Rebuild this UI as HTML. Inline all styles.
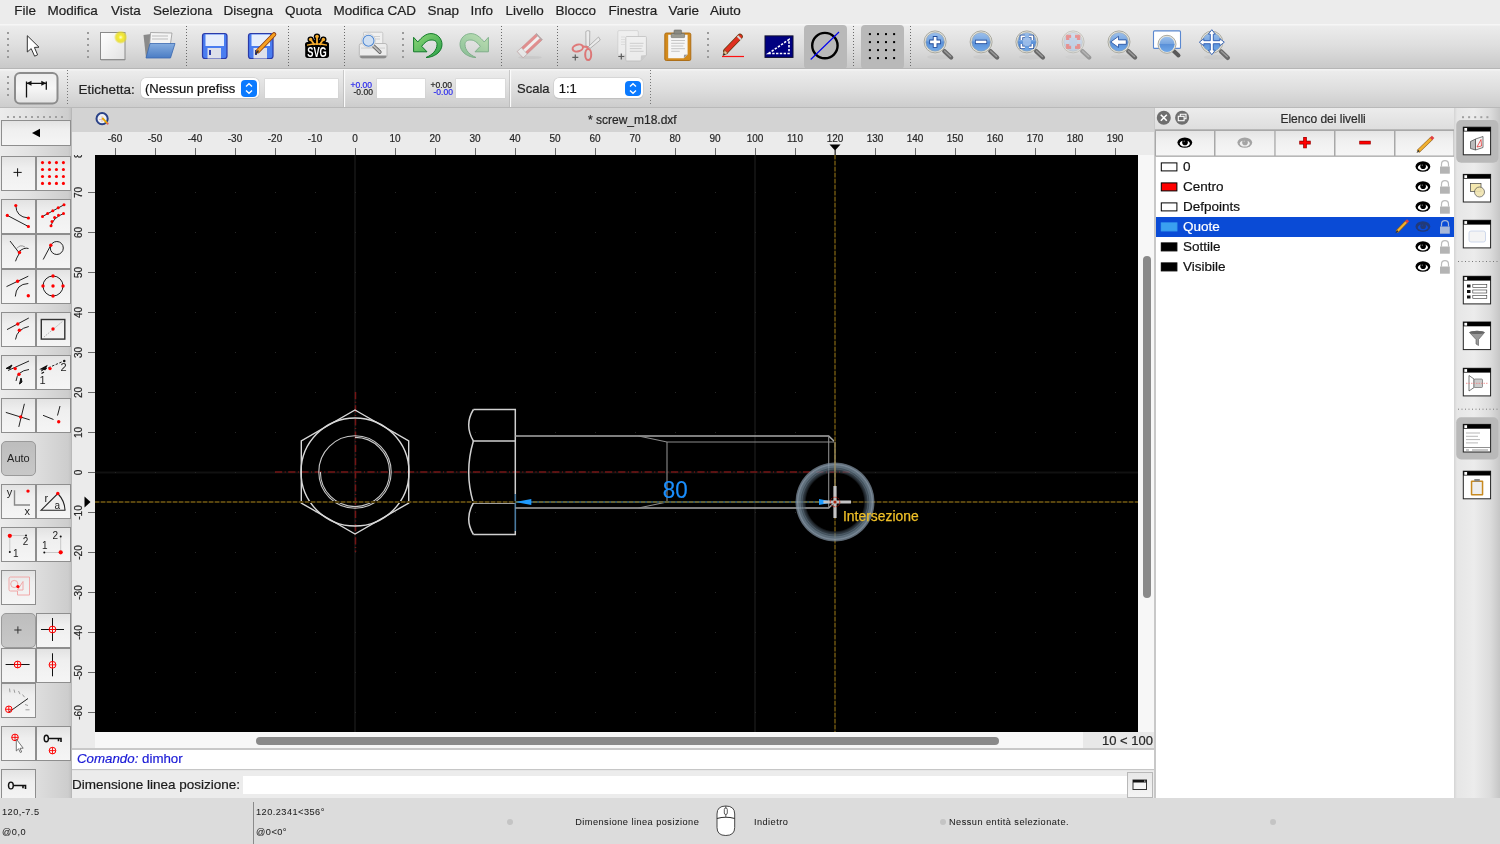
<!DOCTYPE html><html><head><meta charset="utf-8"><style>
*{margin:0;padding:0;box-sizing:border-box}
html,body{width:1500px;height:844px;overflow:hidden;background:#e6e6e6;}
body{will-change:transform;font-family:"Liberation Sans",sans-serif;color:#1f1f1f}
.a{position:absolute}
.t{position:absolute;white-space:nowrap;line-height:1;-webkit-text-stroke:0.2px currentColor}
</style></head><body><div class="a" style="left:0;top:0;width:1500px;height:24px;background:#ececec"></div>
<div class="t" style="left:14.2px;top:4px;font-size:13.5px;color:#1f1f1f">File</div>
<div class="t" style="left:47.5px;top:4px;font-size:13.5px;color:#1f1f1f">Modifica</div>
<div class="t" style="left:111px;top:4px;font-size:13.5px;color:#1f1f1f">Vista</div>
<div class="t" style="left:153px;top:4px;font-size:13.5px;color:#1f1f1f">Seleziona</div>
<div class="t" style="left:223.6px;top:4px;font-size:13.5px;color:#1f1f1f">Disegna</div>
<div class="t" style="left:285px;top:4px;font-size:13.5px;color:#1f1f1f">Quota</div>
<div class="t" style="left:333.6px;top:4px;font-size:13.5px;color:#1f1f1f">Modifica CAD</div>
<div class="t" style="left:427.6px;top:4px;font-size:13.5px;color:#1f1f1f">Snap</div>
<div class="t" style="left:470.4px;top:4px;font-size:13.5px;color:#1f1f1f">Info</div>
<div class="t" style="left:505.6px;top:4px;font-size:13.5px;color:#1f1f1f">Livello</div>
<div class="t" style="left:555.6px;top:4px;font-size:13.5px;color:#1f1f1f">Blocco</div>
<div class="t" style="left:608.4px;top:4px;font-size:13.5px;color:#1f1f1f">Finestra</div>
<div class="t" style="left:668.6px;top:4px;font-size:13.5px;color:#1f1f1f">Varie</div>
<div class="t" style="left:710px;top:4px;font-size:13.5px;color:#1f1f1f">Aiuto</div>
<div class="a" style="left:0;top:24px;width:1500px;height:45px;background:linear-gradient(#f6f6f6 0px,#f6f6f6 1px,#ececec 2px,#dedede 22px,#c9c9c9 44px,#b6b6b6 44px)"></div>
<div class="a" style="left:0;top:69px;width:1500px;height:39px;background:linear-gradient(#f4f4f4 0px,#f4f4f4 1px,#ececec 2px,#dedede 20px,#cdcdcd 38px,#b9b9b9 38px)"></div>
<svg class="a" style="left:0;top:24px" width="1500" height="44" viewBox="0 24 1500 44">
<defs>
<linearGradient id="gLens" x1="0" y1="0" x2="0" y2="1"><stop offset="0" stop-color="#9cc0ec"/><stop offset="0.45" stop-color="#78a6e0"/><stop offset="0.5" stop-color="#5a90d8"/><stop offset="1" stop-color="#70a8e8"/></linearGradient>
<linearGradient id="gLensF" x1="0" y1="0" x2="0" y2="1"><stop offset="0" stop-color="#c4d6ee"/><stop offset="1" stop-color="#a8c4e8"/></linearGradient>
<linearGradient id="gPaper" x1="0" y1="0" x2="1" y2="1"><stop offset="0" stop-color="#ffffff"/><stop offset="1" stop-color="#e2e2e2"/></linearGradient>
<radialGradient id="gGlow"><stop offset="0" stop-color="#ffffd0"/><stop offset="0.35" stop-color="#f4ea30"/><stop offset="0.7" stop-color="#e8dc20" stop-opacity="0.8"/><stop offset="1" stop-color="#e8dc20" stop-opacity="0"/></radialGradient>
<linearGradient id="gFold" x1="0" y1="0" x2="0" y2="1"><stop offset="0" stop-color="#86aee0"/><stop offset="1" stop-color="#4a7cc4"/></linearGradient>
<linearGradient id="gGreen" x1="0" y1="0" x2="0" y2="1"><stop offset="0" stop-color="#5cc060"/><stop offset="1" stop-color="#1c8a30"/></linearGradient>
<linearGradient id="gGreen2" x1="0" y1="0" x2="1" y2="1"><stop offset="0" stop-color="#90d878"/><stop offset="1" stop-color="#2aa048"/></linearGradient>
</defs>
<!-- handles -->
<g fill="#9a9a9a">
<rect x="7" y="32" width="2" height="2"/><rect x="7" y="38" width="2" height="2"/><rect x="7" y="44" width="2" height="2"/><rect x="7" y="50" width="2" height="2"/><rect x="7" y="56" width="2" height="2"/>
<rect x="87" y="32" width="2" height="2"/><rect x="87" y="38" width="2" height="2"/><rect x="87" y="44" width="2" height="2"/><rect x="87" y="50" width="2" height="2"/><rect x="87" y="56" width="2" height="2"/>
<rect x="402" y="32" width="2" height="2"/><rect x="402" y="38" width="2" height="2"/><rect x="402" y="44" width="2" height="2"/><rect x="402" y="50" width="2" height="2"/><rect x="402" y="56" width="2" height="2"/>
<rect x="707" y="32" width="2" height="2"/><rect x="707" y="38" width="2" height="2"/><rect x="707" y="44" width="2" height="2"/><rect x="707" y="50" width="2" height="2"/><rect x="707" y="56" width="2" height="2"/>
</g>
<g stroke="#6a6a6a" stroke-width="1" stroke-dasharray="1 2">
<path d="M186.5 26 V67 M288.5 26 V67 M344.5 26 V67 M501.5 26 V67 M557.5 26 V67 M853.5 26 V67 M910.5 26 V67"/>
</g>
<!-- pointer -->
<path d="M27.3 35.7 L27.3 52 L31.2 48.6 L34.6 56.2 L37.6 54.8 L34.4 47.4 L39 47.2 Z" fill="#fff" stroke="#333" stroke-width="1"/>
<!-- new doc -->
<rect x="100.5" y="32.5" width="24.5" height="27" fill="url(#gPaper)" stroke="#8a8a8a" stroke-width="1"/>
<rect x="101" y="59.5" width="24" height="1.2" fill="#9a9a9a" opacity="0.6"/>
<circle cx="120.7" cy="37.3" r="6.8" fill="url(#gGlow)"/>
<!-- open -->
<path d="M143.5 35 L151 34 L151 57 L146 58 Z" fill="#8a8a8a"/>
<path d="M150.5 32.5 L172 33 L170 47 L149.5 47 Z" fill="#f4f4f4" stroke="#9a9a9a" stroke-width="0.8"/>
<path d="M152 36 H168 M152 39 H168" stroke="#bbb" stroke-width="1"/>
<path d="M150 43.5 L175 43.5 L170.5 58 L146 58 Z" fill="url(#gFold)" stroke="#3a68b0" stroke-width="0.8"/>
<!-- save -->
<g>
<rect x="202.5" y="33.5" width="24.5" height="25" rx="2.5" fill="#4a7df0" stroke="#2a3aa8" stroke-width="1.2"/>
<rect x="205.5" y="34.5" width="18.5" height="11.5" fill="#e6eefc"/>
<rect x="207.5" y="48" width="13.5" height="10.5" fill="#dde0ea"/>
<rect x="209" y="50" width="2" height="5" fill="#2a3aa8"/>
</g>
<g>
<rect x="248.5" y="33.5" width="24.5" height="25" rx="2.5" fill="#4a7df0" stroke="#2a3aa8" stroke-width="1.2"/>
<rect x="251.5" y="34.5" width="18.5" height="11.5" fill="#e6eefc"/>
<rect x="253.5" y="48" width="13.5" height="10.5" fill="#dde0ea"/>
<rect x="255" y="50" width="2" height="5" fill="#2a3aa8"/>
<path d="M258 51 L274 34.5" stroke="#8a3a10" stroke-width="4.6" stroke-linecap="round"/>
<path d="M258 51 L274 34.5" stroke="#f6a020" stroke-width="3" stroke-linecap="round"/>
<path d="M255.5 54 L258.5 50.5" stroke="#333" stroke-width="1.6"/>
</g>
<!-- svg -->
<g>
<path d="M317 37 L317 45 M310.8 39.5 L314.5 45 M323.2 39.5 L319.5 45 M307.5 44.5 L326.5 44.5" stroke="#000" stroke-width="5" stroke-linecap="round"/>
<circle cx="317" cy="36.6" r="3.2" fill="#000"/><circle cx="310.6" cy="39.5" r="3.1" fill="#000"/><circle cx="323.4" cy="39.5" r="3.1" fill="#000"/>
<path d="M305.2 45.5 Q305.2 42.8 308 42.8 H326.3 Q329 42.8 329 45.5 V55.3 Q329 57.9 326.3 57.9 H308 Q305.2 57.9 305.2 55.3 Z" fill="#000"/>
<g fill="#f7ae30" stroke="#f7ae30">
<circle cx="317" cy="36.6" r="1.8" stroke="none"/><circle cx="310.6" cy="39.5" r="1.7" stroke="none"/><circle cx="323.4" cy="39.5" r="1.7" stroke="none"/>
<path d="M317 37 L317 45 M310.8 39.5 L314.5 45 M323.2 39.5 L319.5 45" stroke-width="1.8" fill="none"/>
<path d="M307 45.8 Q317 43.5 327 45.8 L327 44.6 Q317 41.8 307 44.6 Z" stroke="none"/>
</g>
<text x="0" y="0" transform="translate(317 56.9) scale(0.66 1)" text-anchor="middle" font-family="Liberation Sans" font-weight="bold" font-size="14" fill="#fff">SVG</text>
</g>
<!-- print preview -->
<g>
<rect x="363.5" y="32.2" width="19.3" height="13.5" rx="1" fill="#f0f0f0" stroke="#c4c4c4" stroke-width="0.9"/>
<path d="M372 36.5 H380 M372 39 H380" stroke="#d0d0d0" stroke-width="1"/>
<path d="M361.5 43.5 H385 Q387 43.5 387 45.5 V55.5 Q387 58 384.5 58 H362 Q359.3 58 359.3 55.5 V45.5 Q359.3 43.5 361.5 43.5 Z" fill="#ececec" stroke="#b4b4b4" stroke-width="0.9"/>
<path d="M360 55.5 H386.5 V56 Q386.5 58.2 384 58.2 H362 Q360 58.2 360 56 Z" fill="#8a8a8a"/>
<rect x="361" y="47.5" width="24" height="1.2" fill="#d4d4d4"/>
<path d="M373 45.5 L379.8 52" stroke="#555" stroke-width="3.6" stroke-linecap="round"/>
<path d="M373 45.5 L379.8 52" stroke="#b8b8b8" stroke-width="2" stroke-linecap="round"/>
<circle cx="368.5" cy="40.7" r="6.9" fill="#fafafa" stroke="#c8c8c8" stroke-width="0.8"/>
<circle cx="368.5" cy="40.7" r="5.5" fill="#cfdff2" stroke="#4a84d0" stroke-width="1.1"/>
</g>
<!-- undo -->
<g>
<path d="M413.6 37.3 L417.8 42 C422 37 426 33.6 431 33.6 C437.5 33.6 442 38.5 442 44.5 C442 52 434 57.5 426 57.5 C432 55 437 50.5 437 44.5 C437 41 434.5 40 431 40 C428 40 424.5 42.5 421.7 46.3 L427 51.8 L413.6 51.8 Z" fill="url(#gGreen2)" stroke="#127a2a" stroke-width="1"/>
</g>
<!-- redo (faded) -->
<g opacity="0.45" transform="translate(902 0) scale(-1 1)">
<path d="M413.6 37.3 L417.8 42 C422 37 426 33.6 431 33.6 C437.5 33.6 442 38.5 442 44.5 C442 52 434 57.5 426 57.5 C432 55 437 50.5 437 44.5 C437 41 434.5 40 431 40 C428 40 424.5 42.5 421.7 46.3 L427 51.8 L413.6 51.8 Z" fill="url(#gGreen2)" stroke="#127a2a" stroke-width="1"/>
</g>
<!-- eraser faded -->
<g opacity="0.6">
<ellipse cx="530" cy="57.5" rx="12" ry="1.6" fill="#c4c4c4"/>
<g transform="translate(517.3 51.5) rotate(-43.2)">
<rect x="0" y="0" width="26.3" height="8.6" fill="#e25a5a" stroke="#b04848" stroke-width="0.5"/>
<rect x="0" y="2.9" width="26.3" height="2.8" fill="#fafafa"/>
<rect x="0" y="0" width="5.5" height="8.6" fill="#f2f2f2" stroke="#999" stroke-width="0.5"/>
<rect x="25.3" y="0" width="1.2" height="8.6" fill="#888"/>
</g>
</g>
<!-- scissors faded -->
<g opacity="0.6">
<path d="M586 46 L585.8 31.5 Q587.5 30 589.8 31 L589.5 47 Z" fill="#f2f2f2" stroke="#6a6a6a" stroke-width="0.7"/>
<path d="M588.5 46.5 L598.5 37 L600.3 40 L590 48.5 Z" fill="#f2f2f2" stroke="#6a6a6a" stroke-width="0.7"/>
<ellipse cx="577.8" cy="48" rx="5.3" ry="3.4" transform="rotate(-15 577.8 48)" fill="none" stroke="#e03838" stroke-width="2"/>
<ellipse cx="588.2" cy="54.5" rx="3" ry="5.6" fill="none" stroke="#e03838" stroke-width="2"/>
<path d="M582.8 46.5 L587 47 L588.2 49" stroke="#e03838" stroke-width="2.2" fill="none"/>
<path d="M572.3 57.4 H578.3 M575.3 54.4 V60.4" stroke="#111" stroke-width="1.2"/>
</g>
<!-- copy faded -->
<g opacity="0.75">
<rect x="617.8" y="30.6" width="20.5" height="24.6" rx="1.2" fill="#f2f2f2" stroke="#c8c8c8" stroke-width="0.8"/>
<path d="M621 37 H625 M621 39.5 H625 M621 42 H625 M621 44.5 H625" stroke="#d4d4d4" stroke-width="0.8"/>
<path d="M626.8 36.5 H645.6 Q646.4 36.5 646.4 37.3 V55 L640.6 61 H626.8 Q625.8 61 625.8 60 V37.3 Q625.8 36.5 626.8 36.5 Z" fill="#f4f4f4" stroke="#b4b4b4" stroke-width="0.8"/>
<path d="M640.6 61 L641 55.4 L646.4 55 Z" fill="#c8c8c8"/>
<path d="M629.8 43.3 H643.5 M629.8 46 H642.8 M629.8 48.6 H641.6 M629.8 51.3 H643.5" stroke="#c4c4c4" stroke-width="0.9"/>
<path d="M618.3 56.5 H624.3 M621.3 53.5 V59.5" stroke="#333" stroke-width="1.2"/>
</g>
<!-- paste -->
<g>
<rect x="664.8" y="33" width="26" height="27.5" rx="1.5" fill="#d28a1c" stroke="#a86810" stroke-width="0.9"/>
<path d="M668.2 34.8 H687.6 V54.6 L683.8 58.2 H668.2 Z" fill="#f6f6f6"/>
<path d="M683.8 58.2 L684 54.8 L687.6 54.6 Z" fill="#9a9a9a"/>
<path d="M671.8 33.5 H684 Q684.6 33.5 684.6 34.2 V37 Q684.6 37.6 684 37.6 H671.8 Q671.2 37.6 671.2 37 V34.2 Q671.2 33.5 671.8 33.5 Z" fill="#9a9a90" stroke="#6a6a64" stroke-width="0.6"/>
<rect x="674" y="30" width="7.6" height="4" rx="0.8" fill="#8a8a82" stroke="#6a6a64" stroke-width="0.6"/>
<path d="M671.2 40.5 H685 M671.2 43.3 H684.6 M671.2 46 H683.3 M671.2 48.7 H685 M671.2 51.3 H679.8" stroke="#c0c0c0" stroke-width="0.9"/>
</g>
<!-- pencil -->
<g>
<path d="M722 56.5 H744" stroke="#ff1010" stroke-width="1.2"/>
<path d="M726 51 L740 36.5" stroke="#6a3a10" stroke-width="5.6" stroke-linecap="round"/>
<path d="M726 51 L740 36.5" stroke="#e03020" stroke-width="4" stroke-linecap="round"/>
<path d="M737.5 36 L741 39.5" stroke="#d8d8d8" stroke-width="2"/>
<path d="M723 55.5 L724.5 50 L728 53.3 Z" fill="#e8c898" stroke="#6a3a10" stroke-width="0.6"/>
<path d="M723 55.5 L723.8 53 L725.5 54.6 Z" fill="#222"/>
</g>
<!-- blue rect -->
<rect x="765" y="35.9" width="28" height="21.5" fill="#000080" stroke="#101030" stroke-width="1"/>
<path d="M768.5 53.5 L789 39.5 V53.5 Z" fill="none" stroke="#fff" stroke-width="1.6" stroke-dasharray="2.4 1.4"/>
<!-- selected: circle -->
<rect x="804" y="25" width="43" height="44" rx="4" fill="#b9b9b9"/>
<circle cx="824.9" cy="45.6" r="12.7" fill="none" stroke="#000" stroke-width="2.4"/>
<path d="M810.7 59.5 L839 32" stroke="#0000f0" stroke-width="1.1"/>
<!-- selected: grid -->
<rect x="861" y="25" width="43" height="44" rx="4" fill="#b9b9b9"/>
<g fill="#000">
<rect x="868.9" y="33.1" width="2" height="2"/><rect x="868.9" y="41.1" width="2" height="2"/><rect x="868.9" y="49.1" width="2" height="2"/><rect x="868.9" y="57.1" width="2" height="2"/><rect x="877.0" y="33.1" width="2" height="2"/><rect x="877.0" y="41.1" width="2" height="2"/><rect x="877.0" y="49.1" width="2" height="2"/><rect x="877.0" y="57.1" width="2" height="2"/><rect x="885.0" y="33.1" width="2" height="2"/><rect x="885.0" y="41.1" width="2" height="2"/><rect x="885.0" y="49.1" width="2" height="2"/><rect x="885.0" y="57.1" width="2" height="2"/><rect x="893.1" y="33.1" width="2" height="2"/><rect x="893.1" y="41.1" width="2" height="2"/><rect x="893.1" y="49.1" width="2" height="2"/><rect x="893.1" y="57.1" width="2" height="2"/></g>
<g><ellipse cx="939.1" cy="56.9" rx="12" ry="2.5" fill="#000" opacity="0.035"/><path d="M944.3000000000001 51.099999999999994 L951.1 57.5" stroke="#686868" stroke-width="4.4" stroke-linecap="round"/><path d="M944.6 50.9 L950.6 56.5" stroke="#9a9a9a" stroke-width="1.4" stroke-linecap="round"/><circle cx="935.1" cy="41.9" r="11" fill="#e8e8e0" stroke="#aaa9a0" stroke-width="1"/><circle cx="935.1" cy="41.9" r="9.4" fill="url(#gLens)" stroke="#9a9a90" stroke-width="0.5"/><path d="M935.1 36.1 V47.699999999999996 M929.3000000000001 41.9 H940.9" stroke="#1e4a9a" stroke-width="4.6"/><path d="M935.1 36.9 V46.9 M930.1 41.9 H940.1" stroke="#fff" stroke-width="2.8"/></g>
<g><ellipse cx="985.1" cy="56.9" rx="12" ry="2.5" fill="#000" opacity="0.035"/><path d="M990.3000000000001 51.099999999999994 L997.1 57.5" stroke="#686868" stroke-width="4.4" stroke-linecap="round"/><path d="M990.6 50.9 L996.6 56.5" stroke="#9a9a9a" stroke-width="1.4" stroke-linecap="round"/><circle cx="981.1" cy="41.9" r="11" fill="#e8e8e0" stroke="#aaa9a0" stroke-width="1"/><circle cx="981.1" cy="41.9" r="9.4" fill="url(#gLens)" stroke="#9a9a90" stroke-width="0.5"/><path d="M975.1 41.9 H987.1" stroke="#1e4a9a" stroke-width="4.4"/><path d="M975.8000000000001 41.9 H986.4" stroke="#fff" stroke-width="2.6"/></g>
<g><ellipse cx="1030.9" cy="56.9" rx="12" ry="2.5" fill="#000" opacity="0.035"/><path d="M1036.1000000000001 51.099999999999994 L1042.9 57.5" stroke="#686868" stroke-width="4.4" stroke-linecap="round"/><path d="M1036.4 50.9 L1042.4 56.5" stroke="#9a9a9a" stroke-width="1.4" stroke-linecap="round"/><circle cx="1026.9" cy="41.9" r="11" fill="#e8e8e0" stroke="#aaa9a0" stroke-width="1"/><circle cx="1026.9" cy="41.9" r="9.4" fill="url(#gLens)" stroke="#9a9a90" stroke-width="0.5"/><rect x="1022.9000000000001" y="37.9" width="8" height="8" fill="#a8c4ec" opacity="0.8"/><path d="M1021.4000000000001 39.9 V36.4 H1024.9 M1028.9 36.4 H1032.4 V39.9 M1032.4 43.9 V47.4 H1028.9 M1024.9 47.4 H1021.4000000000001 V43.9" stroke="#1e4a9a" stroke-width="3.4" fill="none"/><path d="M1021.4000000000001 39.9 V36.4 H1024.9 M1028.9 36.4 H1032.4 V39.9 M1032.4 43.9 V47.4 H1028.9 M1024.9 47.4 H1021.4000000000001 V43.9" stroke="#fff" stroke-width="1.8" fill="none"/></g>
<g opacity="0.55"><ellipse cx="1077.1" cy="56.9" rx="12" ry="2.5" fill="#000" opacity="0.035"/><path d="M1082.3 51.099999999999994 L1089.1 57.5" stroke="#686868" stroke-width="4.4" stroke-linecap="round"/><path d="M1082.6 50.9 L1088.6 56.5" stroke="#9a9a9a" stroke-width="1.4" stroke-linecap="round"/><circle cx="1073.1" cy="41.9" r="11" fill="#e8e8e0" stroke="#aaa9a0" stroke-width="1"/><circle cx="1073.1" cy="41.9" r="9.4" fill="url(#gLensF)" stroke="#9a9a90" stroke-width="0.5"/><rect x="1069.1" y="37.9" width="8" height="8" fill="#a8c4ec" opacity="0.8"/><path d="M1067.6 39.9 V36.4 H1071.1 M1075.1 36.4 H1078.6 V39.9 M1078.6 43.9 V47.4 H1075.1 M1071.1 47.4 H1067.6 V43.9" stroke="#e06060" stroke-width="3.4" fill="none"/><path d="M1067.6 39.9 V36.4 H1071.1 M1075.1 36.4 H1078.6 V39.9 M1078.6 43.9 V47.4 H1075.1 M1071.1 47.4 H1067.6 V43.9" stroke="#f05050" stroke-width="1.8" fill="none"/></g>
<g><ellipse cx="1123" cy="56.9" rx="12" ry="2.5" fill="#000" opacity="0.035"/><path d="M1128.2 51.099999999999994 L1135 57.5" stroke="#686868" stroke-width="4.4" stroke-linecap="round"/><path d="M1128.5 50.9 L1134.5 56.5" stroke="#9a9a9a" stroke-width="1.4" stroke-linecap="round"/><circle cx="1119" cy="41.9" r="11" fill="#e8e8e0" stroke="#aaa9a0" stroke-width="1"/><circle cx="1119" cy="41.9" r="9.4" fill="url(#gLens)" stroke="#9a9a90" stroke-width="0.5"/><path d="M1110.8 41.9 L1118.5 36.3 V39.9 H1126.3 V44.3 H1118.5 V47.5 Z" fill="#fff" stroke="#1e4a9a" stroke-width="0.8"/></g>
<rect x="1153.5" y="30.9" width="27" height="17.5" rx="1" fill="#fff" stroke="#5a88d0" stroke-width="1.1"/><path d="M1173.5 50.8 L1178.5 55.5" stroke="#5a5a5a" stroke-width="4" stroke-linecap="round"/><circle cx="1167" cy="44.3" r="9" fill="#e8e8e0" stroke="#aaa9a0" stroke-width="1"/><circle cx="1167" cy="44.3" r="7.6" fill="url(#gLens)"/><g><ellipse cx="1215.8" cy="57.2" rx="12" ry="2.5" fill="#000" opacity="0.035"/><path d="M1221.0 51.400000000000006 L1227.8 57.800000000000004" stroke="#686868" stroke-width="4.4" stroke-linecap="round"/><path d="M1221.3 51.2 L1227.3 56.800000000000004" stroke="#9a9a9a" stroke-width="1.4" stroke-linecap="round"/><circle cx="1211.8" cy="42.2" r="11" fill="#e8e8e0" stroke="#aaa9a0" stroke-width="1"/><circle cx="1211.8" cy="42.2" r="9.4" fill="url(#gLens)" stroke="#9a9a90" stroke-width="0.5"/><path d="M1211.8 29.700000000000003 L1215.3 34.2 H1213.3 V40.7 H1219.8 V38.7 L1224.3 42.2 L1219.8 45.7 V43.7 H1213.3 V50.2 H1215.3 L1211.8 54.7 L1208.3 50.2 H1210.3 V43.7 H1203.8 V45.7 L1199.3 42.2 L1203.8 38.7 V40.7 H1210.3 V34.2 H1208.3 Z" fill="#fff" stroke="#2a5ab0" stroke-width="0.9"/></g>
</svg>

<svg class="a" style="left:0;top:68px" width="700" height="39" viewBox="0 68 700 39">
<g fill="#9a9a9a">
<rect x="7" y="76" width="2" height="2"/><rect x="7" y="82" width="2" height="2"/><rect x="7" y="88" width="2" height="2"/><rect x="7" y="94" width="2" height="2"/>
</g>
<rect x="15" y="73" width="42.5" height="30.5" rx="5" fill="url(#gBtn2)" stroke="#8c8c8c" stroke-width="2"/>
<path d="M26.5 81.5 V97.5 M46.3 81.5 V89.8 M26.5 83.3 H46.3" stroke="#111" stroke-width="1.3" fill="none"/>
<path d="M26.5 83.3 L31.5 80.8 V85.8 Z M46.3 83.3 L41.3 80.8 V85.8 Z" fill="#111"/>
<path d="M67.5 70 V106" stroke="#777" stroke-width="1" stroke-dasharray="1 2"/>
<path d="M344.5 70 V107" stroke="#fbfbfb" stroke-width="1.2"/>
<path d="M343.5 70 V107" stroke="#b0b0b0" stroke-width="0.6"/>
<path d="M510.5 70 V107" stroke="#fbfbfb" stroke-width="1.2"/>
<path d="M509.5 70 V107" stroke="#b0b0b0" stroke-width="0.6"/>
<path d="M650.5 70 V106" stroke="#777" stroke-width="1" stroke-dasharray="1 2"/>
<defs><linearGradient id="gBtn2" x1="0" y1="0" x2="0" y2="1"><stop offset="0" stop-color="#ececec"/><stop offset="0.5" stop-color="#f6f6f6"/><stop offset="1" stop-color="#e2e2e2"/></linearGradient></defs>
</svg>
<div class="t" style="left:78.4px;top:82.5px;font-size:13.5px;color:#222">Etichetta:</div>
<div class="a" style="left:141px;top:77.5px;width:118px;height:20.5px;border-radius:5px;background:#fff;box-shadow:0 0 0 0.5px #c8c8c8,0 0.5px 1px rgba(0,0,0,0.15)"></div>
<div class="t" style="left:145px;top:82px;font-size:13px;color:#111">(Nessun prefiss</div>
<div class="a" style="left:241px;top:80px;width:16px;height:16.5px;border-radius:4px;background:#0a7aff"></div>
<svg class="a" style="left:241px;top:80px" width="16" height="17"><path d="M5 6.5 L8 3.8 L11 6.5 M5 10.5 L8 13.2 L11 10.5" stroke="#fff" stroke-width="1.4" fill="none"/></svg>
<div class="a" style="left:265px;top:78.6px;width:73px;height:19.4px;background:#fff;box-shadow:0 0 0 0.5px #cfcfcf"></div>
<div class="t" style="left:350.5px;top:81px;font-size:8.5px;color:#2a2aee">+0.00</div>
<div class="t" style="left:353.5px;top:88px;font-size:8.5px;color:#222">-0.00</div>
<div class="a" style="left:376.7px;top:78.8px;width:48.6px;height:19.6px;background:#fff;box-shadow:0 0 0 0.5px #cfcfcf"></div>
<div class="t" style="left:430.5px;top:81px;font-size:8.5px;color:#222">+0.00</div>
<div class="t" style="left:433.5px;top:88px;font-size:8.5px;color:#2a2aee">-0.00</div>
<div class="a" style="left:456.3px;top:78.8px;width:49px;height:19.6px;background:#fff;box-shadow:0 0 0 0.5px #cfcfcf"></div>
<div class="t" style="left:517px;top:82px;font-size:13px;color:#222">Scala</div>
<div class="a" style="left:554.4px;top:77.5px;width:88.6px;height:20.5px;border-radius:5px;background:#fff;box-shadow:0 0 0 0.5px #c8c8c8,0 0.5px 1px rgba(0,0,0,0.15)"></div>
<div class="t" style="left:558.7px;top:81.5px;font-size:13px;color:#111">1:1</div>
<div class="a" style="left:625px;top:80.5px;width:16px;height:15.5px;border-radius:4px;background:#0a7aff"></div>
<svg class="a" style="left:625px;top:80px" width="16" height="17"><path d="M5 6.5 L8 3.8 L11 6.5 M5 10.5 L8 13.2 L11 10.5" stroke="#fff" stroke-width="1.4" fill="none"/></svg>

<div class="a" style="left:0;top:108px;width:71px;height:690px;background:linear-gradient(90deg,#ececec,#e2e2e2 40%,#cdcdcd 96%,#c2c2c2)"></div>
<svg class="a" style="left:0;top:108px" width="72" height="690" viewBox="0 108 72 690">
<defs><linearGradient id="gB" x1="0" y1="0" x2="0" y2="1"><stop offset="0" stop-color="#e2e2e2"/><stop offset="0.35" stop-color="#efefef"/><stop offset="1" stop-color="#f5f5f5"/></linearGradient><linearGradient id="gSel" x1="0" y1="0" x2="0" y2="1"><stop offset="0" stop-color="#bdbdbd"/><stop offset="1" stop-color="#c8c8c8"/></linearGradient></defs>
<rect x="7" y="116" width="2" height="2" fill="#a0a0a0"/>
<rect x="13" y="116" width="2" height="2" fill="#a0a0a0"/>
<rect x="19" y="116" width="2" height="2" fill="#a0a0a0"/>
<rect x="25" y="116" width="2" height="2" fill="#a0a0a0"/>
<rect x="31" y="116" width="2" height="2" fill="#a0a0a0"/>
<rect x="37" y="116" width="2" height="2" fill="#a0a0a0"/>
<rect x="43" y="116" width="2" height="2" fill="#a0a0a0"/>
<rect x="49" y="116" width="2" height="2" fill="#a0a0a0"/>
<rect x="55" y="116" width="2" height="2" fill="#a0a0a0"/>
<rect x="61" y="116" width="2" height="2" fill="#a0a0a0"/>
<rect x="1.5" y="120.5" width="69" height="25" fill="url(#gB)" stroke="#8e8e8e" stroke-width="1"/>
<rect x="1.5" y="156.5" width="34" height="34" fill="url(#gB)" stroke="#8e8e8e" stroke-width="1"/>
<rect x="36.5" y="156.5" width="34" height="34" fill="url(#gB)" stroke="#8e8e8e" stroke-width="1"/>
<rect x="1.5" y="199.5" width="34" height="34" fill="url(#gB)" stroke="#8e8e8e" stroke-width="1"/>
<rect x="36.5" y="199.5" width="34" height="34" fill="url(#gB)" stroke="#8e8e8e" stroke-width="1"/>
<rect x="1.5" y="234.5" width="34" height="34" fill="url(#gB)" stroke="#8e8e8e" stroke-width="1"/>
<rect x="36.5" y="234.5" width="34" height="34" fill="url(#gB)" stroke="#8e8e8e" stroke-width="1"/>
<rect x="1.5" y="269.5" width="34" height="34" fill="url(#gB)" stroke="#8e8e8e" stroke-width="1"/>
<rect x="36.5" y="269.5" width="34" height="34" fill="url(#gB)" stroke="#8e8e8e" stroke-width="1"/>
<rect x="1.5" y="312.5" width="34" height="34" fill="url(#gB)" stroke="#8e8e8e" stroke-width="1"/>
<rect x="36.5" y="312.5" width="34" height="34" fill="url(#gB)" stroke="#8e8e8e" stroke-width="1"/>
<rect x="1.5" y="355.5" width="34" height="34" fill="url(#gB)" stroke="#8e8e8e" stroke-width="1"/>
<rect x="36.5" y="355.5" width="34" height="34" fill="url(#gB)" stroke="#8e8e8e" stroke-width="1"/>
<rect x="1.5" y="398.5" width="34" height="34" fill="url(#gB)" stroke="#8e8e8e" stroke-width="1"/>
<rect x="36.5" y="398.5" width="34" height="34" fill="url(#gB)" stroke="#8e8e8e" stroke-width="1"/>
<rect x="1.5" y="441.5" width="34" height="34" rx="4.5" fill="url(#gSel)" stroke="#9a9a9a" stroke-width="1"/>
<rect x="1.5" y="484.5" width="34" height="34" fill="url(#gB)" stroke="#8e8e8e" stroke-width="1"/>
<rect x="36.5" y="484.5" width="34" height="34" fill="url(#gB)" stroke="#8e8e8e" stroke-width="1"/>
<rect x="1.5" y="527.5" width="34" height="34" fill="url(#gB)" stroke="#8e8e8e" stroke-width="1"/>
<rect x="36.5" y="527.5" width="34" height="34" fill="url(#gB)" stroke="#8e8e8e" stroke-width="1"/>
<rect x="1.5" y="570.5" width="34" height="34" fill="url(#gB)" stroke="#8e8e8e" stroke-width="1"/>
<rect x="1.5" y="613.5" width="34" height="34" rx="4.5" fill="url(#gSel)" stroke="#9a9a9a" stroke-width="1"/>
<rect x="36.5" y="613.5" width="34" height="34" fill="url(#gB)" stroke="#8e8e8e" stroke-width="1"/>
<rect x="1.5" y="648.5" width="34" height="34" fill="url(#gB)" stroke="#8e8e8e" stroke-width="1"/>
<rect x="36.5" y="648.5" width="34" height="34" fill="url(#gB)" stroke="#8e8e8e" stroke-width="1"/>
<rect x="1.5" y="683.5" width="34" height="34" fill="url(#gB)" stroke="#8e8e8e" stroke-width="1"/>
<rect x="1.5" y="726.5" width="34" height="34" fill="url(#gB)" stroke="#8e8e8e" stroke-width="1"/>
<rect x="36.5" y="726.5" width="34" height="34" fill="url(#gB)" stroke="#8e8e8e" stroke-width="1"/>
<rect x="1.5" y="769.5" width="34" height="34" fill="url(#gB)" stroke="#8e8e8e" stroke-width="1"/>
<path d="M32 133 L40 128.8 L40 137.3 Z" fill="#000"/>
<path d="M13.5 172.4 H21.7 M17.6 168.3 V176.5" stroke="#111" stroke-width="1"/>
<circle cx="42.5" cy="162.6" r="1.55" fill="#ff0000"/>
<circle cx="42.5" cy="169.53" r="1.55" fill="#ff0000"/>
<circle cx="42.5" cy="176.45999999999998" r="1.55" fill="#ff0000"/>
<circle cx="42.5" cy="183.39" r="1.55" fill="#ff0000"/>
<circle cx="49.47" cy="162.6" r="1.55" fill="#ff0000"/>
<circle cx="49.47" cy="169.53" r="1.55" fill="#ff0000"/>
<circle cx="49.47" cy="176.45999999999998" r="1.55" fill="#ff0000"/>
<circle cx="49.47" cy="183.39" r="1.55" fill="#ff0000"/>
<circle cx="56.44" cy="162.6" r="1.55" fill="#ff0000"/>
<circle cx="56.44" cy="169.53" r="1.55" fill="#ff0000"/>
<circle cx="56.44" cy="176.45999999999998" r="1.55" fill="#ff0000"/>
<circle cx="56.44" cy="183.39" r="1.55" fill="#ff0000"/>
<circle cx="63.41" cy="162.6" r="1.55" fill="#ff0000"/>
<circle cx="63.41" cy="169.53" r="1.55" fill="#ff0000"/>
<circle cx="63.41" cy="176.45999999999998" r="1.55" fill="#ff0000"/>
<circle cx="63.41" cy="183.39" r="1.55" fill="#ff0000"/>
<path d="M7.3 215.4 L28.4 226.5 M15.8 205.5 Q16 217 28.4 218" stroke="#222" stroke-width="1" fill="none"/>
<circle cx="7.3" cy="215.4" r="1.6" fill="#ff0000"/>
<circle cx="28.4" cy="226.5" r="1.6" fill="#ff0000"/>
<circle cx="15.8" cy="205.5" r="1.6" fill="#ff0000"/>
<circle cx="28.4" cy="218" r="1.6" fill="#ff0000"/>
<path d="M42.5 216.5 L64 204.8 M51 225.8 Q53 218 63.5 213.5" stroke="#222" stroke-width="1" fill="none"/>
<circle cx="42.5" cy="216.5" r="1.5" fill="#ff0000"/>
<circle cx="47.6" cy="213.6" r="1.5" fill="#ff0000"/>
<circle cx="52.8" cy="210.8" r="1.5" fill="#ff0000"/>
<circle cx="58.2" cy="207.8" r="1.5" fill="#ff0000"/>
<circle cx="64" cy="204.8" r="1.5" fill="#ff0000"/>
<circle cx="51" cy="225.8" r="1.5" fill="#ff0000"/>
<circle cx="52" cy="221.5" r="1.5" fill="#ff0000"/>
<circle cx="54.6" cy="217.6" r="1.5" fill="#ff0000"/>
<circle cx="58.5" cy="215.2" r="1.5" fill="#ff0000"/>
<circle cx="63.5" cy="213.5" r="1.5" fill="#ff0000"/>
<path d="M10 241 L18.5 252 Q24 247 28.5 248.5 M19.5 253 Q16 259 15.5 261.3" stroke="#222" stroke-width="1" fill="none"/>
<path d="M16.8 248.5 Q20 244 25 247" stroke="#555" stroke-width="0.6" fill="none"/>
<circle cx="19.5" cy="252.5" r="1.7" fill="#ff0000"/>
<circle cx="56.8" cy="248" r="6.5" fill="none" stroke="#222" stroke-width="1"/>
<path d="M43.2 259.5 L50.8 245.2" stroke="#222" stroke-width="1"/>
<circle cx="50.8" cy="245.2" r="1.7" fill="#ff0000"/>
<path d="M6.5 286.6 L28.3 276.2 M15.3 296.5 Q16 284 28.3 283.5" stroke="#222" stroke-width="1" fill="none"/>
<circle cx="17.6" cy="281.3" r="1.7" fill="#ff0000"/>
<circle cx="28.3" cy="295.7" r="1.7" fill="#ff0000"/>
<circle cx="53" cy="286" r="10" fill="none" stroke="#222" stroke-width="1"/>
<circle cx="53" cy="276" r="1.7" fill="#ff0000"/>
<circle cx="53" cy="286" r="1.7" fill="#ff0000"/>
<circle cx="53" cy="296" r="1.7" fill="#ff0000"/>
<circle cx="43" cy="286" r="1.7" fill="#ff0000"/>
<circle cx="63" cy="286" r="1.7" fill="#ff0000"/>
<path d="M7 329.6 L28.8 318 M15.5 339.5 Q17 329 28.8 326.5" stroke="#222" stroke-width="1" fill="none"/>
<circle cx="17.8" cy="324" r="1.7" fill="#ff0000"/>
<circle cx="19.4" cy="330.3" r="1.7" fill="#ff0000"/>
<rect x="41.3" y="319.5" width="23.5" height="19.6" fill="none" stroke="#333" stroke-width="1.4"/>
<path d="M44 337 L63 321" stroke="#888" stroke-width="0.6" stroke-dasharray="1.5 1"/>
<circle cx="53" cy="329" r="1.7" fill="#ff0000"/>
<path d="M8 370.5 L29 361 M16 381 Q17 371 29 369.5" stroke="#222" stroke-width="1" fill="none"/>
<path d="M6 368.5 L12 365 L10 368.7 Z M19.5 384 L21 378 L22 382 Z" fill="#111" stroke="#111" stroke-width="1"/>
<circle cx="15.2" cy="368.6" r="1.7" fill="#ff0000"/>
<circle cx="19" cy="374.2" r="1.7" fill="#ff0000"/>
<path d="M41 371 L64.3 360.8" stroke="#222" stroke-width="1" stroke-dasharray="2.5 1.5"/>
<path d="M41 369 L46.5 366 L45 369.5 Z M41.5 373.5 L44 372" stroke="#111" stroke-width="1.2" fill="#111"/>
<circle cx="64.3" cy="361" r="1.2" fill="#111"/>
<circle cx="50" cy="368.6" r="1.7" fill="#ff0000"/>
<text x="60.5" y="371.2" font-family="Liberation Sans" font-size="11" fill="#222">2</text>
<text x="39.5" y="384" font-family="Liberation Sans" font-size="11" fill="#222">1</text>
<path d="M5.8 412.4 L29.7 419.8 M24.4 403.8 L18.8 426.9" stroke="#222" stroke-width="1"/>
<circle cx="20.7" cy="416.9" r="1.7" fill="#ff0000"/>
<path d="M43 415.3 L53.5 419.5 M60 406 L57.5 415.5" stroke="#222" stroke-width="1"/>
<circle cx="58.7" cy="421.7" r="1.7" fill="#ff0000"/>
<text x="18.4" y="462.4" text-anchor="middle" font-family="Liberation Sans" font-size="11" fill="#222">Auto</text>
<path d="M14.5 490.3 V505 H30" stroke="#888" stroke-width="1.4" fill="none"/>
<text x="6.8" y="496" font-family="Liberation Sans" font-size="11" fill="#222">y</text>
<text x="24.6" y="515.3" font-family="Liberation Sans" font-size="11" fill="#222">x</text>
<circle cx="28" cy="491.1" r="1.7" fill="#ff0000"/>
<path d="M41 510.3 L57.8 493.5 Q64.8 501 65 510.3 Z" fill="none" stroke="#222" stroke-width="1.1"/>
<text x="44.5" y="501.5" font-family="Liberation Sans" font-size="11" fill="#222">r</text>
<text x="54.5" y="509" font-family="Liberation Sans" font-size="10" fill="#222">a</text>
<circle cx="57.8" cy="493.5" r="1.7" fill="#ff0000"/>
<path d="M9.8 535.5 V552 M9.8 535.5 H26" stroke="#c8c8c8" stroke-width="1"/>
<circle cx="9.8" cy="535.8" r="2.1" fill="#ff0000"/>
<circle cx="9.8" cy="552" r="1" fill="#111"/><circle cx="26" cy="535.5" r="1" fill="#111"/>
<text x="13" y="556.5" font-family="Liberation Sans" font-size="10" fill="#222">1</text><text x="22.8" y="545" font-family="Liberation Sans" font-size="10" fill="#222">2</text>
<path d="M44.3 552.5 H60.7 M60.7 536.5 V552.5" stroke="#c8c8c8" stroke-width="1"/>
<circle cx="60.7" cy="552.3" r="2.1" fill="#ff0000"/>
<circle cx="44.3" cy="552.5" r="1" fill="#111"/><circle cx="60.7" cy="536.5" r="1" fill="#111"/>
<text x="42" y="549" font-family="Liberation Sans" font-size="10" fill="#222">1</text><text x="52.5" y="539.3" font-family="Liberation Sans" font-size="10" fill="#222">2</text>
<path d="M9 578.5 Q9 577 10.5 577 H29.5 V595 H17.5 V591 H10.5 Q9 591 9 589.5 Z" fill="none" stroke="#f0a0a0" stroke-width="0.9"/>
<circle cx="14.3" cy="584" r="3.6" fill="none" stroke="#f0a0a0" stroke-width="0.9"/><path d="M23 581.5 V590 H17.5 Z" fill="none" stroke="#f0a0a0" stroke-width="0.9"/>
<circle cx="17.9" cy="586.6" r="1.6" fill="#ff0000"/>
<path d="M14.3 630 H21.5 M17.9 626.4 V633.6" stroke="#333" stroke-width="1"/>
<path d="M41.0 629.5 H64.0 M52.5 618.0 V641.0 " stroke="#111" stroke-width="1"/>
<circle cx="52.5" cy="629.5" r="3.4" fill="none" stroke="#f00" stroke-width="1"/><path d="M49.1 629.5 H55.9 M52.5 626.1 V632.9" stroke="#f00" stroke-width="0.9"/>
<path d="M5.600000000000001 664.5 H29.6 " stroke="#111" stroke-width="1"/>
<circle cx="17.6" cy="664.5" r="3.4" fill="none" stroke="#f00" stroke-width="1"/><path d="M14.200000000000001 664.5 H21.0 M17.6 661.1 V667.9" stroke="#f00" stroke-width="0.9"/>
<path d="M52.5 653.3 V676.3 " stroke="#111" stroke-width="1"/>
<circle cx="52.5" cy="664.8" r="3.4" fill="none" stroke="#f00" stroke-width="1"/><path d="M49.1 664.8 H55.9 M52.5 661.4 V668.1999999999999" stroke="#f00" stroke-width="0.9"/>
<path d="M9 712 L28 698.5" stroke="#222" stroke-width="1"/>
<path d="M9.5 688.5 L10 692.3" stroke="#888" stroke-width="0.8"/>
<path d="M14 689.5 L14.8 692.8" stroke="#888" stroke-width="0.8"/>
<path d="M18.5 691 L20 694.2" stroke="#888" stroke-width="0.8"/>
<path d="M22.5 694.5 L24.5 697.2" stroke="#888" stroke-width="0.8"/>
<path d="M25 704.5 L28 705.5" stroke="#888" stroke-width="0.8"/>
<path d="M25.5 709.8 L29.5 709.8" stroke="#888" stroke-width="0.8"/>
<circle cx="8.8" cy="709.3" r="3.3" fill="none" stroke="#f00" stroke-width="1"/><path d="M5.4 709.3 H12.2 M8.8 706 V712.6" stroke="#f00" stroke-width="0.9"/>
<circle cx="15" cy="737.4" r="3.3" fill="none" stroke="#f00" stroke-width="1"/><path d="M11.7 737.4 H18.3 M15 734.1 V740.7" stroke="#f00" stroke-width="0.9"/>
<path d="M16.3 739 V751 L18.6 748.8 L20.3 752.5 L21.7 751.9 L20 748.3 L23.2 748.2 Z" fill="#fff" stroke="#555" stroke-width="0.8"/>
<ellipse cx="46.3" cy="738.5" rx="2.1" ry="3.3" fill="none" stroke="#111" stroke-width="1.4"/><path d="M48.4 738.5 H61 V742 M58.5 738.5 V741.3" stroke="#111" stroke-width="1.6" fill="none"/>
<circle cx="52.5" cy="750.6" r="3.3" fill="none" stroke="#f00" stroke-width="1"/><path d="M49.2 750.6 H55.8 M52.5 747.3 V753.9" stroke="#f00" stroke-width="0.9"/>
<ellipse cx="10.9" cy="785.5" rx="2.4" ry="3.4" fill="none" stroke="#111" stroke-width="1.4"/><path d="M13.3 785.5 H25.5 V789 M23 785.5 V788.3" stroke="#111" stroke-width="1.6" fill="none"/>
</svg>
<div class="a" style="left:72px;top:108px;width:1083px;height:24px;background:#d3d3d3"></div>
<div class="a" style="left:71px;top:108px;width:1px;height:690px;background:#b8b8b8"></div>
<svg class="a" style="left:94px;top:110px" width="18" height="18" viewBox="0 0 18 18">
<circle cx="8.1" cy="8.7" r="5.6" fill="#eef0f4" stroke="#2a4288" stroke-width="2"/>
<path d="M5 9.5 H11 M8 6 V12" stroke="#d8a8a8" stroke-width="0.7"/>
<path d="M8.3 7.8 L13.3 13.3" stroke="#e8a800" stroke-width="1.9"/>
<circle cx="13.6" cy="13.6" r="1.1" fill="#e06060"/>
</svg>
<div class="t" style="left:588px;top:114px;font-size:12px;color:#262626">* screw_m18.dxf</div>
<div class="a" style="left:72px;top:132px;width:1082px;height:23px;background:#ebebeb"></div>
<div class="a" style="left:72px;top:155px;width:23px;height:593px;background:#ebebeb"></div>
<div class="t" style="left:85px;width:60px;text-align:center;top:133.5px;font-size:10px;color:#262626">-60</div>
<div class="a" style="left:115px;top:148px;width:1px;height:7px;background:#6a6a6a"></div>
<div class="t" style="left:125px;width:60px;text-align:center;top:133.5px;font-size:10px;color:#262626">-50</div>
<div class="a" style="left:155px;top:148px;width:1px;height:7px;background:#6a6a6a"></div>
<div class="t" style="left:165px;width:60px;text-align:center;top:133.5px;font-size:10px;color:#262626">-40</div>
<div class="a" style="left:195px;top:148px;width:1px;height:7px;background:#6a6a6a"></div>
<div class="t" style="left:205px;width:60px;text-align:center;top:133.5px;font-size:10px;color:#262626">-30</div>
<div class="a" style="left:235px;top:148px;width:1px;height:7px;background:#6a6a6a"></div>
<div class="t" style="left:245px;width:60px;text-align:center;top:133.5px;font-size:10px;color:#262626">-20</div>
<div class="a" style="left:275px;top:148px;width:1px;height:7px;background:#6a6a6a"></div>
<div class="t" style="left:285px;width:60px;text-align:center;top:133.5px;font-size:10px;color:#262626">-10</div>
<div class="a" style="left:315px;top:148px;width:1px;height:7px;background:#6a6a6a"></div>
<div class="t" style="left:325px;width:60px;text-align:center;top:133.5px;font-size:10px;color:#262626">0</div>
<div class="a" style="left:355px;top:148px;width:1px;height:7px;background:#6a6a6a"></div>
<div class="t" style="left:365px;width:60px;text-align:center;top:133.5px;font-size:10px;color:#262626">10</div>
<div class="a" style="left:395px;top:148px;width:1px;height:7px;background:#6a6a6a"></div>
<div class="t" style="left:405px;width:60px;text-align:center;top:133.5px;font-size:10px;color:#262626">20</div>
<div class="a" style="left:435px;top:148px;width:1px;height:7px;background:#6a6a6a"></div>
<div class="t" style="left:445px;width:60px;text-align:center;top:133.5px;font-size:10px;color:#262626">30</div>
<div class="a" style="left:475px;top:148px;width:1px;height:7px;background:#6a6a6a"></div>
<div class="t" style="left:485px;width:60px;text-align:center;top:133.5px;font-size:10px;color:#262626">40</div>
<div class="a" style="left:515px;top:148px;width:1px;height:7px;background:#6a6a6a"></div>
<div class="t" style="left:525px;width:60px;text-align:center;top:133.5px;font-size:10px;color:#262626">50</div>
<div class="a" style="left:555px;top:148px;width:1px;height:7px;background:#6a6a6a"></div>
<div class="t" style="left:565px;width:60px;text-align:center;top:133.5px;font-size:10px;color:#262626">60</div>
<div class="a" style="left:595px;top:148px;width:1px;height:7px;background:#6a6a6a"></div>
<div class="t" style="left:605px;width:60px;text-align:center;top:133.5px;font-size:10px;color:#262626">70</div>
<div class="a" style="left:635px;top:148px;width:1px;height:7px;background:#6a6a6a"></div>
<div class="t" style="left:645px;width:60px;text-align:center;top:133.5px;font-size:10px;color:#262626">80</div>
<div class="a" style="left:675px;top:148px;width:1px;height:7px;background:#6a6a6a"></div>
<div class="t" style="left:685px;width:60px;text-align:center;top:133.5px;font-size:10px;color:#262626">90</div>
<div class="a" style="left:715px;top:148px;width:1px;height:7px;background:#6a6a6a"></div>
<div class="t" style="left:725px;width:60px;text-align:center;top:133.5px;font-size:10px;color:#262626">100</div>
<div class="a" style="left:755px;top:148px;width:1px;height:7px;background:#6a6a6a"></div>
<div class="t" style="left:765px;width:60px;text-align:center;top:133.5px;font-size:10px;color:#262626">110</div>
<div class="a" style="left:795px;top:148px;width:1px;height:7px;background:#6a6a6a"></div>
<div class="t" style="left:805px;width:60px;text-align:center;top:133.5px;font-size:10px;color:#262626">120</div>
<div class="a" style="left:835px;top:148px;width:1px;height:7px;background:#6a6a6a"></div>
<div class="t" style="left:845px;width:60px;text-align:center;top:133.5px;font-size:10px;color:#262626">130</div>
<div class="a" style="left:875px;top:148px;width:1px;height:7px;background:#6a6a6a"></div>
<div class="t" style="left:885px;width:60px;text-align:center;top:133.5px;font-size:10px;color:#262626">140</div>
<div class="a" style="left:915px;top:148px;width:1px;height:7px;background:#6a6a6a"></div>
<div class="t" style="left:925px;width:60px;text-align:center;top:133.5px;font-size:10px;color:#262626">150</div>
<div class="a" style="left:955px;top:148px;width:1px;height:7px;background:#6a6a6a"></div>
<div class="t" style="left:965px;width:60px;text-align:center;top:133.5px;font-size:10px;color:#262626">160</div>
<div class="a" style="left:995px;top:148px;width:1px;height:7px;background:#6a6a6a"></div>
<div class="t" style="left:1005px;width:60px;text-align:center;top:133.5px;font-size:10px;color:#262626">170</div>
<div class="a" style="left:1035px;top:148px;width:1px;height:7px;background:#6a6a6a"></div>
<div class="t" style="left:1045px;width:60px;text-align:center;top:133.5px;font-size:10px;color:#262626">180</div>
<div class="a" style="left:1075px;top:148px;width:1px;height:7px;background:#6a6a6a"></div>
<div class="t" style="left:1085px;width:60px;text-align:center;top:133.5px;font-size:10px;color:#262626">190</div>
<div class="a" style="left:1115px;top:148px;width:1px;height:7px;background:#6a6a6a"></div>
<svg class="a" style="left:828px;top:143px" width="14" height="12"><path d="M1.5 1.5 L12.5 1.5 L7 7.5 Z" fill="#000"/><rect x="6.5" y="7" width="1" height="5" fill="#333"/></svg>
<div class="a" style="left:72px;top:155px;width:23px;height:577px;overflow:hidden">
<div class="t" style="left:-24px;top:591.5px;width:60px;height:11px;line-height:11px;text-align:center;font-size:10px;color:#262626;transform:rotate(-90deg)">-70</div>
<div class="a" style="left:16px;top:597px;width:7px;height:1px;background:#6a6a6a"></div>
<div class="t" style="left:-24px;top:551.5px;width:60px;height:11px;line-height:11px;text-align:center;font-size:10px;color:#262626;transform:rotate(-90deg)">-60</div>
<div class="a" style="left:16px;top:557px;width:7px;height:1px;background:#6a6a6a"></div>
<div class="t" style="left:-24px;top:511.5px;width:60px;height:11px;line-height:11px;text-align:center;font-size:10px;color:#262626;transform:rotate(-90deg)">-50</div>
<div class="a" style="left:16px;top:517px;width:7px;height:1px;background:#6a6a6a"></div>
<div class="t" style="left:-24px;top:471.5px;width:60px;height:11px;line-height:11px;text-align:center;font-size:10px;color:#262626;transform:rotate(-90deg)">-40</div>
<div class="a" style="left:16px;top:477px;width:7px;height:1px;background:#6a6a6a"></div>
<div class="t" style="left:-24px;top:431.5px;width:60px;height:11px;line-height:11px;text-align:center;font-size:10px;color:#262626;transform:rotate(-90deg)">-30</div>
<div class="a" style="left:16px;top:437px;width:7px;height:1px;background:#6a6a6a"></div>
<div class="t" style="left:-24px;top:391.5px;width:60px;height:11px;line-height:11px;text-align:center;font-size:10px;color:#262626;transform:rotate(-90deg)">-20</div>
<div class="a" style="left:16px;top:397px;width:7px;height:1px;background:#6a6a6a"></div>
<div class="t" style="left:-24px;top:351.5px;width:60px;height:11px;line-height:11px;text-align:center;font-size:10px;color:#262626;transform:rotate(-90deg)">-10</div>
<div class="a" style="left:16px;top:357px;width:7px;height:1px;background:#6a6a6a"></div>
<div class="t" style="left:-24px;top:311.5px;width:60px;height:11px;line-height:11px;text-align:center;font-size:10px;color:#262626;transform:rotate(-90deg)">0</div>
<div class="a" style="left:16px;top:317px;width:7px;height:1px;background:#6a6a6a"></div>
<div class="t" style="left:-24px;top:271.5px;width:60px;height:11px;line-height:11px;text-align:center;font-size:10px;color:#262626;transform:rotate(-90deg)">10</div>
<div class="a" style="left:16px;top:277px;width:7px;height:1px;background:#6a6a6a"></div>
<div class="t" style="left:-24px;top:231.5px;width:60px;height:11px;line-height:11px;text-align:center;font-size:10px;color:#262626;transform:rotate(-90deg)">20</div>
<div class="a" style="left:16px;top:237px;width:7px;height:1px;background:#6a6a6a"></div>
<div class="t" style="left:-24px;top:191.5px;width:60px;height:11px;line-height:11px;text-align:center;font-size:10px;color:#262626;transform:rotate(-90deg)">30</div>
<div class="a" style="left:16px;top:197px;width:7px;height:1px;background:#6a6a6a"></div>
<div class="t" style="left:-24px;top:151.5px;width:60px;height:11px;line-height:11px;text-align:center;font-size:10px;color:#262626;transform:rotate(-90deg)">40</div>
<div class="a" style="left:16px;top:157px;width:7px;height:1px;background:#6a6a6a"></div>
<div class="t" style="left:-24px;top:111.5px;width:60px;height:11px;line-height:11px;text-align:center;font-size:10px;color:#262626;transform:rotate(-90deg)">50</div>
<div class="a" style="left:16px;top:117px;width:7px;height:1px;background:#6a6a6a"></div>
<div class="t" style="left:-24px;top:71.5px;width:60px;height:11px;line-height:11px;text-align:center;font-size:10px;color:#262626;transform:rotate(-90deg)">60</div>
<div class="a" style="left:16px;top:77px;width:7px;height:1px;background:#6a6a6a"></div>
<div class="t" style="left:-24px;top:31.5px;width:60px;height:11px;line-height:11px;text-align:center;font-size:10px;color:#262626;transform:rotate(-90deg)">70</div>
<div class="a" style="left:16px;top:37px;width:7px;height:1px;background:#6a6a6a"></div>
<div class="t" style="left:-24px;top:-8.5px;width:60px;height:11px;line-height:11px;text-align:center;font-size:10px;color:#262626;transform:rotate(-90deg)">80</div>
<div class="a" style="left:16px;top:-3px;width:7px;height:1px;background:#6a6a6a"></div>
<svg class="a" style="left:11px;top:340px" width="10" height="14"><path d="M1.5 1.5 L1.5 12.5 L7.5 7 Z" fill="#000"/></svg>
</div>
<div class="a" style="left:1138px;top:155px;width:16px;height:577px;background:#f7f7f7"></div>
<div class="a" style="left:1143px;top:256px;width:8px;height:342px;border-radius:4px;background:#8a8a8a"></div>
<div class="a" style="left:95px;top:732px;width:988px;height:16px;background:#f7f7f7"></div>
<div class="a" style="left:72px;top:732px;width:23px;height:16px;background:#ebebeb"></div>
<div class="a" style="left:256px;top:737px;width:743px;height:8px;border-radius:4px;background:#8a8a8a"></div>
<div class="a" style="left:1083px;top:732px;width:71px;height:16px;background:#e8e8e8"></div>
<div class="t" style="left:1083px;width:70px;text-align:right;top:734px;font-size:13px;color:#262626">10 &lt; 100</div>
<div class="a" style="left:72px;top:748px;width:1082px;height:2px;background:#c8c8c8"></div>
<svg class="a" style="left:95px;top:155px" width="1043" height="577" viewBox="95 155 1043 577">
<rect x="95" y="155" width="1043" height="577" fill="#000"/>
<path d="M355 155 V732 M755 155 V732 M95 472.5 H1138" stroke="#111111" stroke-width="2" fill="none"/>
<path d="M115 712h1v1h-1zM115 672h1v1h-1zM115 632h1v1h-1zM115 592h1v1h-1zM115 552h1v1h-1zM115 512h1v1h-1zM115 472h1v1h-1zM115 432h1v1h-1zM115 392h1v1h-1zM115 352h1v1h-1zM115 312h1v1h-1zM115 272h1v1h-1zM115 232h1v1h-1zM115 192h1v1h-1zM155 712h1v1h-1zM155 672h1v1h-1zM155 632h1v1h-1zM155 592h1v1h-1zM155 552h1v1h-1zM155 512h1v1h-1zM155 472h1v1h-1zM155 432h1v1h-1zM155 392h1v1h-1zM155 352h1v1h-1zM155 312h1v1h-1zM155 272h1v1h-1zM155 232h1v1h-1zM155 192h1v1h-1zM195 712h1v1h-1zM195 672h1v1h-1zM195 632h1v1h-1zM195 592h1v1h-1zM195 552h1v1h-1zM195 512h1v1h-1zM195 472h1v1h-1zM195 432h1v1h-1zM195 392h1v1h-1zM195 352h1v1h-1zM195 312h1v1h-1zM195 272h1v1h-1zM195 232h1v1h-1zM195 192h1v1h-1zM235 712h1v1h-1zM235 672h1v1h-1zM235 632h1v1h-1zM235 592h1v1h-1zM235 552h1v1h-1zM235 512h1v1h-1zM235 472h1v1h-1zM235 432h1v1h-1zM235 392h1v1h-1zM235 352h1v1h-1zM235 312h1v1h-1zM235 272h1v1h-1zM235 232h1v1h-1zM235 192h1v1h-1zM275 712h1v1h-1zM275 672h1v1h-1zM275 632h1v1h-1zM275 592h1v1h-1zM275 552h1v1h-1zM275 512h1v1h-1zM275 472h1v1h-1zM275 432h1v1h-1zM275 392h1v1h-1zM275 352h1v1h-1zM275 312h1v1h-1zM275 272h1v1h-1zM275 232h1v1h-1zM275 192h1v1h-1zM315 712h1v1h-1zM315 672h1v1h-1zM315 632h1v1h-1zM315 592h1v1h-1zM315 552h1v1h-1zM315 512h1v1h-1zM315 472h1v1h-1zM315 432h1v1h-1zM315 392h1v1h-1zM315 352h1v1h-1zM315 312h1v1h-1zM315 272h1v1h-1zM315 232h1v1h-1zM315 192h1v1h-1zM355 712h1v1h-1zM355 672h1v1h-1zM355 632h1v1h-1zM355 592h1v1h-1zM355 552h1v1h-1zM355 512h1v1h-1zM355 472h1v1h-1zM355 432h1v1h-1zM355 392h1v1h-1zM355 352h1v1h-1zM355 312h1v1h-1zM355 272h1v1h-1zM355 232h1v1h-1zM355 192h1v1h-1zM395 712h1v1h-1zM395 672h1v1h-1zM395 632h1v1h-1zM395 592h1v1h-1zM395 552h1v1h-1zM395 512h1v1h-1zM395 472h1v1h-1zM395 432h1v1h-1zM395 392h1v1h-1zM395 352h1v1h-1zM395 312h1v1h-1zM395 272h1v1h-1zM395 232h1v1h-1zM395 192h1v1h-1zM435 712h1v1h-1zM435 672h1v1h-1zM435 632h1v1h-1zM435 592h1v1h-1zM435 552h1v1h-1zM435 512h1v1h-1zM435 472h1v1h-1zM435 432h1v1h-1zM435 392h1v1h-1zM435 352h1v1h-1zM435 312h1v1h-1zM435 272h1v1h-1zM435 232h1v1h-1zM435 192h1v1h-1zM475 712h1v1h-1zM475 672h1v1h-1zM475 632h1v1h-1zM475 592h1v1h-1zM475 552h1v1h-1zM475 512h1v1h-1zM475 472h1v1h-1zM475 432h1v1h-1zM475 392h1v1h-1zM475 352h1v1h-1zM475 312h1v1h-1zM475 272h1v1h-1zM475 232h1v1h-1zM475 192h1v1h-1zM515 712h1v1h-1zM515 672h1v1h-1zM515 632h1v1h-1zM515 592h1v1h-1zM515 552h1v1h-1zM515 512h1v1h-1zM515 472h1v1h-1zM515 432h1v1h-1zM515 392h1v1h-1zM515 352h1v1h-1zM515 312h1v1h-1zM515 272h1v1h-1zM515 232h1v1h-1zM515 192h1v1h-1zM555 712h1v1h-1zM555 672h1v1h-1zM555 632h1v1h-1zM555 592h1v1h-1zM555 552h1v1h-1zM555 512h1v1h-1zM555 472h1v1h-1zM555 432h1v1h-1zM555 392h1v1h-1zM555 352h1v1h-1zM555 312h1v1h-1zM555 272h1v1h-1zM555 232h1v1h-1zM555 192h1v1h-1zM595 712h1v1h-1zM595 672h1v1h-1zM595 632h1v1h-1zM595 592h1v1h-1zM595 552h1v1h-1zM595 512h1v1h-1zM595 472h1v1h-1zM595 432h1v1h-1zM595 392h1v1h-1zM595 352h1v1h-1zM595 312h1v1h-1zM595 272h1v1h-1zM595 232h1v1h-1zM595 192h1v1h-1zM635 712h1v1h-1zM635 672h1v1h-1zM635 632h1v1h-1zM635 592h1v1h-1zM635 552h1v1h-1zM635 512h1v1h-1zM635 472h1v1h-1zM635 432h1v1h-1zM635 392h1v1h-1zM635 352h1v1h-1zM635 312h1v1h-1zM635 272h1v1h-1zM635 232h1v1h-1zM635 192h1v1h-1zM675 712h1v1h-1zM675 672h1v1h-1zM675 632h1v1h-1zM675 592h1v1h-1zM675 552h1v1h-1zM675 512h1v1h-1zM675 472h1v1h-1zM675 432h1v1h-1zM675 392h1v1h-1zM675 352h1v1h-1zM675 312h1v1h-1zM675 272h1v1h-1zM675 232h1v1h-1zM675 192h1v1h-1zM715 712h1v1h-1zM715 672h1v1h-1zM715 632h1v1h-1zM715 592h1v1h-1zM715 552h1v1h-1zM715 512h1v1h-1zM715 472h1v1h-1zM715 432h1v1h-1zM715 392h1v1h-1zM715 352h1v1h-1zM715 312h1v1h-1zM715 272h1v1h-1zM715 232h1v1h-1zM715 192h1v1h-1zM755 712h1v1h-1zM755 672h1v1h-1zM755 632h1v1h-1zM755 592h1v1h-1zM755 552h1v1h-1zM755 512h1v1h-1zM755 472h1v1h-1zM755 432h1v1h-1zM755 392h1v1h-1zM755 352h1v1h-1zM755 312h1v1h-1zM755 272h1v1h-1zM755 232h1v1h-1zM755 192h1v1h-1zM795 712h1v1h-1zM795 672h1v1h-1zM795 632h1v1h-1zM795 592h1v1h-1zM795 552h1v1h-1zM795 512h1v1h-1zM795 472h1v1h-1zM795 432h1v1h-1zM795 392h1v1h-1zM795 352h1v1h-1zM795 312h1v1h-1zM795 272h1v1h-1zM795 232h1v1h-1zM795 192h1v1h-1zM835 712h1v1h-1zM835 672h1v1h-1zM835 632h1v1h-1zM835 592h1v1h-1zM835 552h1v1h-1zM835 512h1v1h-1zM835 472h1v1h-1zM835 432h1v1h-1zM835 392h1v1h-1zM835 352h1v1h-1zM835 312h1v1h-1zM835 272h1v1h-1zM835 232h1v1h-1zM835 192h1v1h-1zM875 712h1v1h-1zM875 672h1v1h-1zM875 632h1v1h-1zM875 592h1v1h-1zM875 552h1v1h-1zM875 512h1v1h-1zM875 472h1v1h-1zM875 432h1v1h-1zM875 392h1v1h-1zM875 352h1v1h-1zM875 312h1v1h-1zM875 272h1v1h-1zM875 232h1v1h-1zM875 192h1v1h-1zM915 712h1v1h-1zM915 672h1v1h-1zM915 632h1v1h-1zM915 592h1v1h-1zM915 552h1v1h-1zM915 512h1v1h-1zM915 472h1v1h-1zM915 432h1v1h-1zM915 392h1v1h-1zM915 352h1v1h-1zM915 312h1v1h-1zM915 272h1v1h-1zM915 232h1v1h-1zM915 192h1v1h-1zM955 712h1v1h-1zM955 672h1v1h-1zM955 632h1v1h-1zM955 592h1v1h-1zM955 552h1v1h-1zM955 512h1v1h-1zM955 472h1v1h-1zM955 432h1v1h-1zM955 392h1v1h-1zM955 352h1v1h-1zM955 312h1v1h-1zM955 272h1v1h-1zM955 232h1v1h-1zM955 192h1v1h-1zM995 712h1v1h-1zM995 672h1v1h-1zM995 632h1v1h-1zM995 592h1v1h-1zM995 552h1v1h-1zM995 512h1v1h-1zM995 472h1v1h-1zM995 432h1v1h-1zM995 392h1v1h-1zM995 352h1v1h-1zM995 312h1v1h-1zM995 272h1v1h-1zM995 232h1v1h-1zM995 192h1v1h-1zM1035 712h1v1h-1zM1035 672h1v1h-1zM1035 632h1v1h-1zM1035 592h1v1h-1zM1035 552h1v1h-1zM1035 512h1v1h-1zM1035 472h1v1h-1zM1035 432h1v1h-1zM1035 392h1v1h-1zM1035 352h1v1h-1zM1035 312h1v1h-1zM1035 272h1v1h-1zM1035 232h1v1h-1zM1035 192h1v1h-1zM1075 712h1v1h-1zM1075 672h1v1h-1zM1075 632h1v1h-1zM1075 592h1v1h-1zM1075 552h1v1h-1zM1075 512h1v1h-1zM1075 472h1v1h-1zM1075 432h1v1h-1zM1075 392h1v1h-1zM1075 352h1v1h-1zM1075 312h1v1h-1zM1075 272h1v1h-1zM1075 232h1v1h-1zM1075 192h1v1h-1zM1115 712h1v1h-1zM1115 672h1v1h-1zM1115 632h1v1h-1zM1115 592h1v1h-1zM1115 552h1v1h-1zM1115 512h1v1h-1zM1115 472h1v1h-1zM1115 432h1v1h-1zM1115 392h1v1h-1zM1115 352h1v1h-1zM1115 312h1v1h-1zM1115 272h1v1h-1zM1115 232h1v1h-1zM1115 192h1v1h-1z" fill="#262626"/><!-- red center lines -->
<path d="M275 472 H851" stroke="#741414" stroke-width="1.5" stroke-dasharray="7.2 2.5 1 2.5" fill="none"/>
<path d="M355.5 392 V552" stroke="#741414" stroke-width="1.5" stroke-dasharray="7.2 2.5 1 2.5" fill="none"/>
<!-- hex nut -->
<g fill="none" stroke="#d8d8d8" stroke-width="1.4">
<path d="M355 410 L408.7 441 L408.7 503 L355 534 L301.3 503 L301.3 441 Z"/>
<circle cx="355" cy="472" r="54"/>
<circle cx="355" cy="472" r="36.2" stroke="#c8c8c8" stroke-width="1.1"/>
<path d="M355 437.4 A34.6 34.6 0 1 1 320.4 472" stroke="#c8c8c8" stroke-width="1.1"/>
</g>
<!-- bolt head -->
<g fill="none" stroke="#d0d0d0" stroke-width="1.5">
<path d="M473.4 409.5 H515.3 V494"/>
<path d="M515.3 531 V534.5 H473.4"/>
<path d="M473.4 409.5 Q464 425 473.4 441 H515.3"/>
<path d="M473.4 441 Q464 472 473.4 503 H515.3"/>
<path d="M473.4 503 Q464 519 473.4 534.5"/>
</g>
<path d="M515.3 494 V531" stroke="#4a7aa0" stroke-width="1.6"/>
<!-- shank -->
<g fill="none" stroke="#a8a8a8" stroke-width="1.6">
<path d="M515.3 436 H828.7 L835 442 V502"/>
<path d="M515.3 508 H828.7 L835 502"/>
</g>
<g fill="none" stroke="#8c8c8c" stroke-width="1.1">
<path d="M638.5 436 L667 442 H835"/>
<path d="M638.5 508 L667 502"/>
<path d="M667 442 V502"/>
<path d="M828.7 436 V508"/>
</g>
<!-- crosshair dashed lines -->
<path d="M515 502 H835" stroke="#2a5068" stroke-width="1.8"/>
<path d="M95 502 H515 M835 502 H1138 M835 155 V732" stroke="#1e1604" stroke-width="1.8" fill="none"/>
<path d="M95 502 H515 M835 502 H1138 M835 155 V732" stroke="#58450e" stroke-width="1.8" stroke-dasharray="4.2 1.8" fill="none"/>
<path d="M515 502 H835" stroke="#646234" stroke-width="1.8" stroke-dasharray="4.2 1.8" fill="none"/>


<!-- dimension -->
<path d="M515.3 502 L531.3 499 L531.3 505 Z" fill="#1e9bff"/>
<path d="M835 502 L819 499 L819 505 Z" fill="#1e9bff"/>
<text x="0" y="0" transform="translate(662.8 498) scale(0.93 1)" font-family="Liberation Sans" font-size="24" fill="#1a8fff" stroke="#1a8fff" stroke-width="0.2">80</text>
<!-- snap indicator -->
<defs><radialGradient id="gSnap" cx="835" cy="502" r="40" gradientUnits="userSpaceOnUse">
<stop offset="0.72" stop-color="#6a7e90" stop-opacity="0"/>
<stop offset="0.78" stop-color="#4a5a68" stop-opacity="0.55"/>
<stop offset="0.86" stop-color="#627888" stop-opacity="0.75"/>
<stop offset="0.93" stop-color="#8496a6" stop-opacity="0.85"/>
<stop offset="0.975" stop-color="#8090a0" stop-opacity="0.7"/>
<stop offset="1" stop-color="#7a8a9a" stop-opacity="0"/>
</radialGradient></defs>
<circle cx="835" cy="502" r="40" fill="url(#gSnap)"/>
<g fill="none" opacity="0.25">
<circle cx="835" cy="502" r="37.5" stroke="#b0c0d0" stroke-width="0.7"/>
<circle cx="835" cy="502" r="35" stroke="#b0c0d0" stroke-width="0.7"/>
<circle cx="835" cy="502" r="33" stroke="#a0b0c0" stroke-width="0.7"/>
</g>
<path d="M835 442 V486" stroke="#9a8c62" stroke-width="1.3"/>
<path d="M835 486 V518 M823.4 502 H851" stroke="#c4c4c4" stroke-width="3.2"/>
<circle cx="835" cy="502" r="4.8" fill="none" stroke="#c02010" stroke-width="1" stroke-dasharray="1.5 1"/>
<circle cx="835" cy="502" r="1.6" fill="#b02a10"/>
<text x="843" y="520.6" font-family="Liberation Sans" font-size="13.9" fill="#f0c028" stroke="#f0c028" stroke-width="0.25">Intersezione</text>
</svg>

<div class="a" style="left:1154px;top:108px;width:301px;height:690px;background:#c8c8c8"></div>
<div class="a" style="left:1155px;top:108px;width:299px;height:21px;background:linear-gradient(#ececec,#dedede)"></div>
<div class="t" style="left:1280.4px;top:112.5px;font-size:12px;color:#2a2a2a">Elenco dei livelli</div>
<div class="a" style="left:1156px;top:157px;width:298px;height:641px;background:#fff"></div>
<svg class="a" style="left:1154px;top:108px" width="302" height="690" viewBox="1154 108 302 690">
<defs><linearGradient id="gLB" x1="0" y1="0" x2="0" y2="1"><stop offset="0" stop-color="#e4e4e4"/><stop offset="0.4" stop-color="#f0f0f0"/><stop offset="1" stop-color="#f6f6f6"/></linearGradient></defs>
<circle cx="1163.8" cy="117.8" r="7" fill="#6e6e6e"/><path d="M1160.8 114.8 L1166.8 120.8 M1166.8 114.8 L1160.8 120.8" stroke="#fff" stroke-width="1.6"/>
<circle cx="1182.1" cy="117.8" r="7" fill="#6e6e6e"/><rect x="1178.3" y="116.3" width="5.8" height="4.4" fill="none" stroke="#fff" stroke-width="1.1"/><path d="M1180.3 116.3 V114.3 H1186 V118.7 H1184.1" fill="none" stroke="#fff" stroke-width="1.1"/>
<rect x="1155" y="129.5" width="299" height="27" fill="#a8a8a8"/>
<rect x="1156" y="131" width="58" height="24.5" fill="url(#gLB)"/>
<rect x="1215.5" y="131" width="58.799999999999955" height="24.5" fill="url(#gLB)"/>
<rect x="1275.6" y="131" width="58.40000000000009" height="24.5" fill="url(#gLB)"/>
<rect x="1335.5" y="131" width="58.5" height="24.5" fill="url(#gLB)"/>
<rect x="1395.5" y="131" width="58.0" height="24.5" fill="url(#gLB)"/>
<ellipse cx="1184.8" cy="142.6" rx="7.4" ry="5.2" fill="#000"/>
<ellipse cx="1184.8" cy="143.5" rx="5.0" ry="3.1" fill="#fff"/>
<circle cx="1185.0" cy="142.4" r="2.8" fill="#000"/>
<circle cx="1184.2" cy="141.2" r="0.6" fill="#fff" opacity="0.6"/>
<ellipse cx="1244.8" cy="142.6" rx="7.4" ry="5.2" fill="#a4a4a4"/>
<ellipse cx="1244.8" cy="143.5" rx="5.0" ry="3.1" fill="#f0f0f0"/>
<circle cx="1245.0" cy="142.4" r="2.8" fill="#a4a4a4"/>
<circle cx="1244.2" cy="141.2" r="0.6" fill="#f0f0f0" opacity="0.6"/>
<path d="M1305 137 V148.2 M1299.3 142.6 H1310.7" stroke="#8a0000" stroke-width="3.6"/><path d="M1305 137.4 V147.8 M1299.7 142.6 H1310.3" stroke="#ff0000" stroke-width="2.4"/>
<path d="M1359.3 142.6 H1370.7" stroke="#8a0000" stroke-width="3.6"/><path d="M1359.7 142.6 H1370.3" stroke="#ff0000" stroke-width="2.4"/>
<path d="M1418 151.5 L1431.5 138.5" stroke="#8a5a20" stroke-width="3.8" stroke-linecap="butt"/>
<path d="M1418 151.5 L1431.5 138.5" stroke="#f0b030" stroke-width="2.6"/>
<path d="M1416.5 153.0 L1418.2 149.7 L1419.8 151.3 Z" fill="#333"/>
<path d="M1431.0 139.0 L1433.1 136.9" stroke="#e04040" stroke-width="3.4000000000000004"/>
<rect x="1161.3" y="162.9" width="15.6" height="8" fill="#fff" stroke="#000" stroke-width="1"/>
<ellipse cx="1422.9" cy="166.5" rx="7.4" ry="5.2" fill="#000"/>
<ellipse cx="1422.9" cy="167.4" rx="5.0" ry="3.1" fill="#fff"/>
<circle cx="1423.1000000000001" cy="166.3" r="2.8" fill="#000"/>
<circle cx="1422.3000000000002" cy="165.1" r="0.6" fill="#fff" opacity="0.6"/>
<path d="M1441.5 166.5 V164.2 Q1441.5 160.6 1445 160.6 Q1448.5 160.6 1448.5 164.2 V166.5" fill="none" stroke="#bcbcbc" stroke-width="1.2"/><rect x="1440" y="166.5" width="9.8" height="7.2" fill="#b4b4b4"/>
<rect x="1161.3" y="182.9" width="15.6" height="8" fill="#ff0000" stroke="#000" stroke-width="1"/>
<ellipse cx="1422.9" cy="186.5" rx="7.4" ry="5.2" fill="#000"/>
<ellipse cx="1422.9" cy="187.4" rx="5.0" ry="3.1" fill="#fff"/>
<circle cx="1423.1000000000001" cy="186.3" r="2.8" fill="#000"/>
<circle cx="1422.3000000000002" cy="185.1" r="0.6" fill="#fff" opacity="0.6"/>
<path d="M1441.5 186.5 V184.2 Q1441.5 180.6 1445 180.6 Q1448.5 180.6 1448.5 184.2 V186.5" fill="none" stroke="#bcbcbc" stroke-width="1.2"/><rect x="1440" y="186.5" width="9.8" height="7.2" fill="#b4b4b4"/>
<rect x="1161.3" y="202.9" width="15.6" height="8" fill="#fff" stroke="#000" stroke-width="1"/>
<ellipse cx="1422.9" cy="206.5" rx="7.4" ry="5.2" fill="#000"/>
<ellipse cx="1422.9" cy="207.4" rx="5.0" ry="3.1" fill="#fff"/>
<circle cx="1423.1000000000001" cy="206.3" r="2.8" fill="#000"/>
<circle cx="1422.3000000000002" cy="205.1" r="0.6" fill="#fff" opacity="0.6"/>
<path d="M1441.5 206.5 V204.2 Q1441.5 200.6 1445 200.6 Q1448.5 200.6 1448.5 204.2 V206.5" fill="none" stroke="#bcbcbc" stroke-width="1.2"/><rect x="1440" y="206.5" width="9.8" height="7.2" fill="#b4b4b4"/>
<rect x="1156" y="217" width="298" height="20" fill="#0a4bd6"/>
<rect x="1161.3" y="222.9" width="15.6" height="8" fill="#3aa0f0" stroke="#3aa0f0" stroke-width="1"/>
<ellipse cx="1422.9" cy="226.5" rx="7.4" ry="5.2" fill="#223a78"/>
<ellipse cx="1422.9" cy="227.4" rx="5.0" ry="3.1" fill="#0a4bd6"/>
<circle cx="1423.1000000000001" cy="226.3" r="2.8" fill="#223a78"/>
<circle cx="1422.3000000000002" cy="225.1" r="0.6" fill="#0a4bd6" opacity="0.6"/>
<path d="M1441.5 226.5 V224.2 Q1441.5 220.6 1445 220.6 Q1448.5 220.6 1448.5 224.2 V226.5" fill="none" stroke="#a8b8d8" stroke-width="1.2"/><rect x="1440" y="226.5" width="9.8" height="7.2" fill="#a8b8d8"/>
<path d="M1396.8 231.7 L1406.5 221.8" stroke="#8a5a20" stroke-width="3.4000000000000004" stroke-linecap="butt"/>
<path d="M1396.8 231.7 L1406.5 221.8" stroke="#f0b030" stroke-width="2.2"/>
<path d="M1395.3 233.2 L1397.0 229.89999999999998 L1398.6 231.5 Z" fill="#333"/>
<path d="M1406.0 222.3 L1408.1 220.20000000000002" stroke="#e04040" stroke-width="3.0"/>
<rect x="1161.3" y="242.9" width="15.6" height="8" fill="#000" stroke="#000" stroke-width="1"/>
<ellipse cx="1422.9" cy="246.5" rx="7.4" ry="5.2" fill="#000"/>
<ellipse cx="1422.9" cy="247.4" rx="5.0" ry="3.1" fill="#fff"/>
<circle cx="1423.1000000000001" cy="246.3" r="2.8" fill="#000"/>
<circle cx="1422.3000000000002" cy="245.1" r="0.6" fill="#fff" opacity="0.6"/>
<path d="M1441.5 246.5 V244.2 Q1441.5 240.6 1445 240.6 Q1448.5 240.6 1448.5 244.2 V246.5" fill="none" stroke="#bcbcbc" stroke-width="1.2"/><rect x="1440" y="246.5" width="9.8" height="7.2" fill="#b4b4b4"/>
<rect x="1161.3" y="262.9" width="15.6" height="8" fill="#000" stroke="#000" stroke-width="1"/>
<ellipse cx="1422.9" cy="266.5" rx="7.4" ry="5.2" fill="#000"/>
<ellipse cx="1422.9" cy="267.4" rx="5.0" ry="3.1" fill="#fff"/>
<circle cx="1423.1000000000001" cy="266.3" r="2.8" fill="#000"/>
<circle cx="1422.3000000000002" cy="265.1" r="0.6" fill="#fff" opacity="0.6"/>
<path d="M1441.5 266.5 V264.2 Q1441.5 260.6 1445 260.6 Q1448.5 260.6 1448.5 264.2 V266.5" fill="none" stroke="#bcbcbc" stroke-width="1.2"/><rect x="1440" y="266.5" width="9.8" height="7.2" fill="#b4b4b4"/>
</svg>
<div class="t" style="left:1183px;top:159.9px;font-size:13.5px;color:#111">0</div>
<div class="t" style="left:1183px;top:179.9px;font-size:13.5px;color:#111">Centro</div>
<div class="t" style="left:1183px;top:199.9px;font-size:13.5px;color:#111">Defpoints</div>
<div class="t" style="left:1183px;top:219.9px;font-size:13.5px;color:#fff">Quote</div>
<div class="t" style="left:1183px;top:239.9px;font-size:13.5px;color:#111">Sottile</div>
<div class="t" style="left:1183px;top:259.9px;font-size:13.5px;color:#111">Visibile</div>
<div class="a" style="left:1454px;top:108px;width:46px;height:690px;background:linear-gradient(90deg,#d4d4d4 0px,#e6e6e6 3px,#ececec 20px,#dcdcdc 36px,#c6c6c6 46px)"></div>
<svg class="a" style="left:1454px;top:108px" width="46" height="690" viewBox="1454 108 46 690">
<rect x="1462.0" y="116.2" width="2" height="2" fill="#a0a0a0"/>
<rect x="1468.1" y="116.2" width="2" height="2" fill="#a0a0a0"/>
<rect x="1474.2" y="116.2" width="2" height="2" fill="#a0a0a0"/>
<rect x="1480.3" y="116.2" width="2" height="2" fill="#a0a0a0"/>
<rect x="1486.4" y="116.2" width="2" height="2" fill="#a0a0a0"/>
<rect x="1456.2" y="120.1" width="42.2" height="42.7" rx="5" fill="#b9b9b9"/>
<rect x="1456.2" y="417.2" width="42.2" height="42.2" rx="5" fill="#b9b9b9"/>
<path d="M1458 261.5 H1499 M1458 409.2 H1499" stroke="#777" stroke-width="1" stroke-dasharray="1 2.5"/>
<rect x="1463.3" y="127.2" width="27.3" height="27.6" fill="#fff" stroke="#222" stroke-width="1"/>
<rect x="1463.3" y="127.2" width="27.3" height="4.3" fill="#000"/>
<rect x="1464.3" y="128.0" width="2.8" height="2.8" fill="#fff"/>
<path d="M1470.5 141.5 L1475.5 139 V150 L1470.5 148.5 Z" fill="#bbb" stroke="#444" stroke-width="0.7"/><path d="M1475.5 139 L1483 136.5 V147.5 L1475.5 150 Z" fill="#f4f4f4" stroke="#444" stroke-width="0.7"/><path d="M1477 147 L1481 139.5 L1481.5 146 Z" fill="none" stroke="#e02020" stroke-width="0.7"/>
<rect x="1463.3" y="174.4" width="27.3" height="27.6" fill="#fff" stroke="#222" stroke-width="1"/>
<rect x="1463.3" y="174.4" width="27.3" height="4.3" fill="#000"/>
<rect x="1464.3" y="175.20000000000002" width="2.8" height="2.8" fill="#fff"/>
<rect x="1470.5" y="183.5" width="10.5" height="8" fill="#f4e8b0" stroke="#444" stroke-width="0.7"/><circle cx="1479.5" cy="192" r="5" fill="#f0e4b0" stroke="#444" stroke-width="0.7" opacity="0.9"/>
<rect x="1463.3" y="220.3" width="27.3" height="27.6" fill="#fff" stroke="#222" stroke-width="1"/>
<rect x="1463.3" y="220.3" width="27.3" height="4.3" fill="#000"/>
<rect x="1464.3" y="221.10000000000002" width="2.8" height="2.8" fill="#fff"/>
<rect x="1469" y="231" width="16.5" height="11" rx="2" fill="#f4f4f4" stroke="#c4d0e8" stroke-width="0.8"/>
<rect x="1463.3" y="276.3" width="27.3" height="27.6" fill="#fff" stroke="#222" stroke-width="1"/>
<rect x="1463.3" y="276.3" width="27.3" height="4.3" fill="#000"/>
<rect x="1464.3" y="277.1" width="2.8" height="2.8" fill="#fff"/>
<rect x="1467" y="284.5" width="3.5" height="3" fill="#111"/><rect x="1472.8" y="284.5" width="14" height="3" fill="#fff" stroke="#333" stroke-width="0.6"/>
<rect x="1467" y="290.0" width="3.5" height="3" fill="#111"/><rect x="1472.8" y="290.0" width="14" height="3" fill="#fff" stroke="#333" stroke-width="0.6"/>
<rect x="1467" y="295.5" width="3.5" height="3" fill="#111"/><rect x="1472.8" y="295.5" width="14" height="3" fill="#fff" stroke="#333" stroke-width="0.6"/>
<rect x="1463.3" y="322" width="27.3" height="27.6" fill="#fff" stroke="#222" stroke-width="1"/>
<rect x="1463.3" y="322" width="27.3" height="4.3" fill="#000"/>
<rect x="1464.3" y="322.8" width="2.8" height="2.8" fill="#fff"/>
<path d="M1469.5 332.5 Q1477 329.5 1484.5 332.5 L1478.5 339.5 V345.5 L1476 344 V339.5 Z" fill="#999" stroke="#555" stroke-width="0.6"/><ellipse cx="1477" cy="332.5" rx="7.5" ry="1.6" fill="#666"/>
<rect x="1463.3" y="368.3" width="27.3" height="27.6" fill="#fff" stroke="#222" stroke-width="1"/>
<rect x="1463.3" y="368.3" width="27.3" height="4.3" fill="#000"/>
<rect x="1464.3" y="369.1" width="2.8" height="2.8" fill="#fff"/>
<path d="M1469 375.5 L1474 379 V387.5 L1469 391 Z" fill="#fff" stroke="#444" stroke-width="0.7"/><rect x="1474" y="379" width="8.5" height="8.5" rx="1" fill="#ccc" stroke="#555" stroke-width="0.6"/><path d="M1466 383.3 H1488" stroke="#f08080" stroke-width="0.8" stroke-dasharray="1.5 1"/>
<rect x="1463.3" y="424.4" width="27.3" height="27.6" fill="#fff" stroke="#222" stroke-width="1"/>
<rect x="1463.3" y="424.4" width="27.3" height="4.3" fill="#000"/>
<rect x="1464.3" y="425.2" width="2.8" height="2.8" fill="#fff"/>
<path d="M1466 433.0 H1480" stroke="#999" stroke-width="0.7"/>
<path d="M1466 436.3 H1478" stroke="#999" stroke-width="0.7"/>
<path d="M1466 439.6 H1480" stroke="#999" stroke-width="0.7"/>
<path d="M1466 442.9 H1478" stroke="#999" stroke-width="0.7"/>
<path d="M1463.3 447.5 H1490.6" stroke="#444" stroke-width="0.6"/><path d="M1466 450 H1469 M1472 450 H1488" stroke="#777" stroke-width="0.8"/>
<rect x="1463.3" y="471.2" width="27.3" height="27.6" fill="#fff" stroke="#222" stroke-width="1"/>
<rect x="1463.3" y="471.2" width="27.3" height="4.3" fill="#000"/>
<rect x="1464.3" y="472.0" width="2.8" height="2.8" fill="#fff"/>
<rect x="1470.8" y="480.5" width="12.5" height="15" rx="1" fill="#c88a20"/><rect x="1472.3" y="482" width="9.5" height="12" fill="#eee"/><rect x="1474.3" y="479" width="5.5" height="2.5" fill="#888"/>
</svg>
<div class="a" style="left:72px;top:750px;width:1082px;height:20px;background:#fff;border-bottom:1px solid #c6c6c6"></div>
<div class="t" style="left:77px;top:751.5px;font-size:13.3px;color:#1a1ad6"><i>Comando:</i> dimhor</div>
<div class="a" style="left:72px;top:771px;width:1082px;height:27px;background:#ececec"></div>
<div class="t" style="left:72px;top:778px;font-size:13.5px;color:#1a1a1a">Dimensione linea posizione:</div>
<div class="a" style="left:243px;top:776px;width:884px;height:17.5px;background:#fff"></div>
<div class="a" style="left:1127px;top:772px;width:26px;height:25.5px;background:linear-gradient(#e8e8e8,#f4f4f4);border:1px solid #b8b8b8"></div>
<svg class="a" style="left:1127px;top:772px" width="26" height="26"><rect x="6" y="8" width="13.5" height="9.5" fill="#f4f4f4" stroke="#333" stroke-width="1"/><rect x="6" y="8" width="13.5" height="2.5" fill="#111"/><rect x="17.2" y="8.6" width="1.2" height="1" fill="#fff"/></svg>
<div class="a" style="left:0;top:798px;width:1500px;height:46px;background:#dcdcdc"></div>
<div class="t" style="left:2px;top:808px;font-size:9.2px;letter-spacing:0.47px;-webkit-text-stroke:0.05px currentColor;color:#222">120,-7.5</div>
<div class="t" style="left:2px;top:828px;font-size:9.2px;letter-spacing:0.47px;-webkit-text-stroke:0.05px currentColor;color:#222">@0,0</div>
<div class="a" style="left:253px;top:802px;width:1px;height:42px;background:#8a8a8a"></div>
<div class="t" style="left:256px;top:808px;font-size:9.2px;letter-spacing:0.47px;-webkit-text-stroke:0.05px currentColor;color:#222">120.2341&lt;356°</div>
<div class="t" style="left:256px;top:828px;font-size:9.2px;letter-spacing:0.47px;-webkit-text-stroke:0.05px currentColor;color:#222">@0&lt;0°</div>
<div class="t" style="left:575.2px;top:818px;font-size:9.2px;letter-spacing:0.47px;-webkit-text-stroke:0.05px currentColor;color:#222">Dimensione linea posizione</div>
<div class="t" style="left:753.9px;top:818px;font-size:9.2px;letter-spacing:0.47px;-webkit-text-stroke:0.05px currentColor;color:#222">Indietro</div>
<div class="t" style="left:949px;top:818px;font-size:9.2px;letter-spacing:0.47px;-webkit-text-stroke:0.05px currentColor;color:#222">Nessun entità selezionate.</div>
<div class="a" style="left:506.5px;top:819px;width:6px;height:6px;border-radius:3px;background:#c4c4c4"></div>
<div class="a" style="left:940px;top:819px;width:6px;height:6px;border-radius:3px;background:#c4c4c4"></div>
<div class="a" style="left:1269.5px;top:819px;width:6px;height:6px;border-radius:3px;background:#c4c4c4"></div>
<svg class="a" style="left:716px;top:805px" width="20" height="32"><path d="M1 9 Q1 1 9.8 1 Q18.7 1 18.7 9 V22.5 Q18.7 30.5 9.8 30.5 Q1 30.5 1 22.5 Z" fill="#fff" stroke="#333" stroke-width="0.9"/><path d="M1 13.5 Q9.8 11 18.7 13.5" fill="none" stroke="#333" stroke-width="1.2"/><path d="M9.8 1 V12" stroke="#333" stroke-width="0.8"/><rect x="8.3" y="3" width="3" height="6.5" rx="1.5" fill="#fff" stroke="#333" stroke-width="0.8"/></svg></body></html>
